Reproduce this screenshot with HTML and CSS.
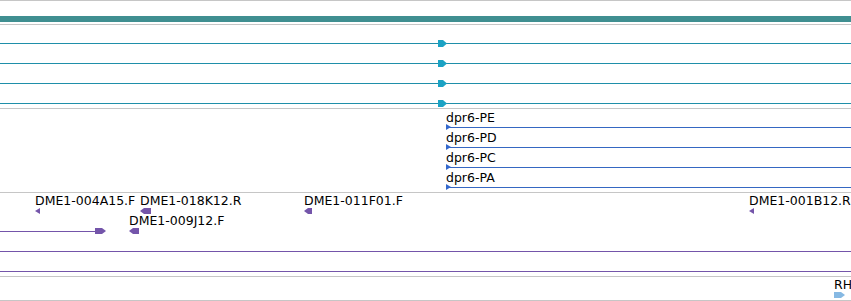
FILE: index.html
```html
<!DOCTYPE html>
<html lang="en">
<head>
    <meta charset="UTF-8">
    <title>Tracks</title>
    <link rel="stylesheet" href="styles.css">
</head>
<body>
<div class="tracks">

    <!-- gene span -->
    <div class="track">
        <div class="row">
            <div class="bar teal-bar"></div>
        </div>
    </div>

    <!-- transcripts (collapsed) -->
    <div class="track">
        <div class="row">
            <div class="line teal-line"></div>
            <svg class="glyph" style="left:438px" width="9" height="7"><polygon class="teal-head" points="0,0 5,0 9,3.5 5,7 0,7"/></svg>
        </div>
        <div class="row">
            <div class="line teal-line"></div>
            <svg class="glyph" style="left:438px" width="9" height="7"><polygon class="teal-head" points="0,0 5,0 9,3.5 5,7 0,7"/></svg>
        </div>
        <div class="row">
            <div class="line teal-line"></div>
            <svg class="glyph" style="left:438px" width="9" height="7"><polygon class="teal-head" points="0,0 5,0 9,3.5 5,7 0,7"/></svg>
        </div>
        <div class="row">
            <div class="line teal-line"></div>
            <svg class="glyph" style="left:438px" width="9" height="7"><polygon class="teal-head" points="0,0 5,0 9,3.5 5,7 0,7"/></svg>
        </div>
    </div>

    <!-- dpr6 transcripts -->
    <div class="track labels-low">
        <div class="row">
            <span class="label" style="left:446px">dpr6-PE</span>
            <div class="line blue-line" style="left:446px"></div>
            <svg class="glyph" style="left:446px" width="5" height="6"><polygon class="blue-head" points="0,0 5,3 0,6"/></svg>
        </div>
        <div class="row">
            <span class="label" style="left:446px">dpr6-PD</span>
            <div class="line blue-line" style="left:446px"></div>
            <svg class="glyph" style="left:446px" width="5" height="6"><polygon class="blue-head" points="0,0 5,3 0,6"/></svg>
        </div>
        <div class="row">
            <span class="label" style="left:446px">dpr6-PC</span>
            <div class="line blue-line" style="left:446px"></div>
            <svg class="glyph" style="left:446px" width="5" height="6"><polygon class="blue-head" points="0,0 5,3 0,6"/></svg>
        </div>
        <div class="row">
            <span class="label" style="left:446px">dpr6-PA</span>
            <div class="line blue-line" style="left:446px"></div>
            <svg class="glyph" style="left:446px" width="5" height="6"><polygon class="blue-head" points="0,0 5,3 0,6"/></svg>
        </div>
    </div>

    <!-- clone ends -->
    <div class="track">
        <div class="row">
            <span class="label" style="left:35px">DME1-004A15.F</span>
            <svg class="glyph" style="left:35px" width="5" height="6"><polygon class="purple-head" points="0,3 5,0 5,6"/></svg>
            <span class="label" style="left:140px">DME1-018K12.R</span>
            <svg class="glyph" style="left:140px" width="11" height="6"><polygon class="purple-head" points="0,3 4,0 11,0 11,6 4,6"/></svg>
            <span class="label" style="left:304px">DME1-011F01.F</span>
            <svg class="glyph" style="left:304px" width="8" height="6"><polygon class="purple-head" points="0,3 4,0 8,0 8,6 4,6"/></svg>
            <span class="label" style="left:749px">DME1-001B12.R</span>
            <svg class="glyph" style="left:749px" width="5" height="6"><polygon class="purple-head" points="0,3 5,0 5,6"/></svg>
        </div>
        <div class="row">
            <div class="line purple-line" style="right:auto;width:95px"></div>
            <svg class="glyph" style="left:95px" width="11" height="6"><polygon class="purple-head" points="0,0 7,0 11,3 7,6 0,6"/></svg>
            <span class="label" style="left:129px">DME1-009J12.F</span>
            <svg class="glyph" style="left:129px" width="10" height="6"><polygon class="purple-head" points="0,3 4,0 10,0 10,6 4,6"/></svg>
        </div>
        <div class="row">
            <div class="line purple-line"></div>
        </div>
        <div class="row">
            <div class="line purple-line"></div>
        </div>
    </div>

    <!-- RH -->
    <div class="track">
        <div class="row">
            <span class="label" style="left:834px">RH</span>
            <svg class="glyph" style="left:834px" width="11" height="6"><polygon class="light-head" points="0,0 7,0 11,3 7,6 0,6"/></svg>
        </div>
    </div>

    <div class="track"></div>
</div>
</body>
</html>
```

FILE: styles.css
```css
body {
    margin: 0;
    padding: 0;
    background: #fff;
    font-family: "DejaVu Sans", sans-serif;
    font-size: 12.5px;
    color: #000;
    overflow: hidden;
}

.tracks {
    width: 851px;
}

.track {
    border-top: 1px solid #c6c6c6;
    padding-bottom: 3px;
}

.row {
    position: relative;
    height: 20px;
}

.label {
    position: absolute;
    top: 1px;
    line-height: 14px;
    white-space: nowrap;
}

.labels-low .label {
    top: 2px;
}

.line {
    position: absolute;
    top: 18px;
    left: 0;
    right: 0;
    height: 1px;
}

.glyph {
    position: absolute;
    top: 15px;
    display: block;
}

.bar {
    position: absolute;
    top: 15px;
    left: 0;
    right: 0;
    height: 6px;
}

.teal-bar {
    background: #408f91;
}

.teal-line {
    background: #1f8fa9;
}

.teal-head {
    fill: #1ba2c4;
}

.blue-line {
    background: #3567c2;
}

.blue-head {
    fill: #3468cc;
}

.purple-line {
    background: #7455aa;
}

.purple-head {
    fill: #7455aa;
}

.light-head {
    fill: #86b9e3;
}
```
